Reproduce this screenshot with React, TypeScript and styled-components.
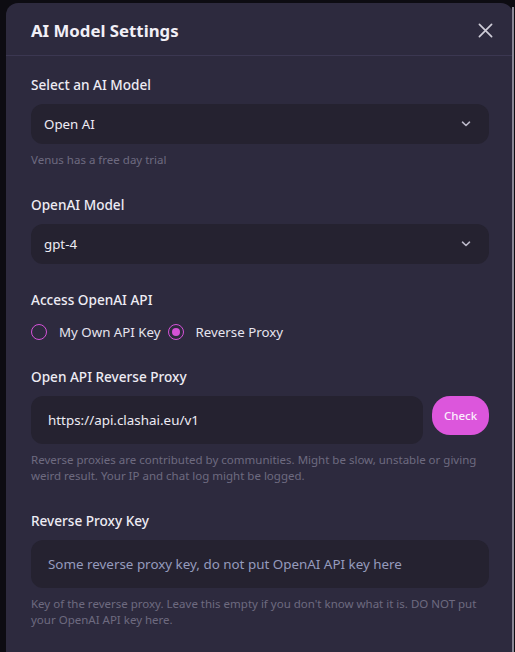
import React from "react";
import styled, { createGlobalStyle } from "styled-components";

const Global = createGlobalStyle`
  html, body { margin: 0; padding: 0; background: #0d0c12; }
  body { font-family: "Noto Sans", "Open Sans", sans-serif; -webkit-font-smoothing: antialiased; }
  * { box-sizing: border-box; }
`;

const Backdrop = styled.div`
  width: 515px;
  height: 652px;
  padding: 3px 1px 0 6px;
  overflow: hidden;
`;

const Modal = styled.div`
  position: relative;
  width: 507px;
  height: 700px;
  background: #2d2a3e;
  border-radius: 12px 12px 0 0;
  &::after {
    content: "";
    position: absolute;
    right: -1px;
    top: 4px;
    width: 2px;
    bottom: 0;
    background: #8b8896;
  }
`;

const Header = styled.div`
  display: flex;
  align-items: center;
  justify-content: space-between;
  height: 53px;
  padding: 3px 20px 0 25px;
  border-bottom: 1px solid #3b3751;
`;

const Title = styled.h1`
  margin: 0;
  font-size: 16.8px;
  font-weight: 700;
  color: #f1eff6;
`;

const CloseButton = styled.button`
  background: none;
  border: none;
  padding: 0;
  width: 16px;
  height: 16px;
  display: flex;
  align-items: center;
  justify-content: center;
  color: #cfcdd8;
`;

const Body = styled.div`
  display: flex;
  flex-direction: column;
  padding: 19px 24px 0 25px;
`;

const Field = styled.div<{ $gap?: number }>`
  display: flex;
  flex-direction: column;
  margin-bottom: ${(p) => p.$gap ?? 28}px;
`;

const Label = styled.div`
  font-size: 13.6px;
  font-weight: 500;
  color: #eeecf4;
  line-height: 20px;
  margin-bottom: 9px;
`;

const SelectBox = styled.div`
  display: flex;
  align-items: center;
  justify-content: space-between;
  height: 40px;
  padding: 0 18px 0 13px;
  background: #252230;
  border-radius: 12px;
  color: #eeecf4;
  font-size: 13.3px;
`;

const Hint = styled.div`
  margin-top: 8px;
  font-size: 11.5px;
  line-height: 16px;
  color: #6e6a80;
`;

const RadioRow = styled.div`
  display: flex;
  align-items: center;
  gap: 7px;
  margin-top: 4px;
`;

const RadioOption = styled.label`
  display: flex;
  align-items: center;
  gap: 12px;
  font-size: 13.3px;
  color: #e6e4ee;
`;

const Circle = styled.span<{ $checked?: boolean }>`
  width: 16px;
  height: 16px;
  border-radius: 50%;
  border: 1.5px solid #d552d8;
  display: flex;
  align-items: center;
  justify-content: center;
  &::after {
    content: "";
    width: 8px;
    height: 8px;
    border-radius: 50%;
    background: ${(p) => (p.$checked ? "#d552d8" : "transparent")};
  }
`;

const InputRow = styled.div`
  display: flex;
  align-items: flex-start;
  gap: 9px;
`;

const TextBox = styled.div<{ $placeholder?: boolean }>`
  flex: 1 0 auto;
  height: 48px;
  display: flex;
  align-items: center;
  padding: 0 17px;
  background: #252230;
  border-radius: 12px;
  font-size: 13.4px;
  color: ${(p) => (p.$placeholder ? "#959bbd" : "#eeecf4")};
`;

const CheckButton = styled.button`
  height: 39px;
  width: 57px;
  padding: 0;
  border: none;
  border-radius: 18px;
  background: #dc56dc;
  color: #fbeefc;
  font-family: inherit;
  font-size: 11.5px;
  font-weight: 500;
`;

const Chevron = () => (
  <svg width="10" height="10" viewBox="0 0 10 10" fill="none" stroke="#b9b6c6" strokeWidth="1.6" strokeLinecap="round" strokeLinejoin="round">
    <path d="M1.5 3.2l3.5 3.3 3.5-3.3" />
  </svg>
);

export default function App() {
  return (
    <>
      <Global />
      <Backdrop>
        <Modal>
          <Header>
            <Title>AI Model Settings</Title>
            <CloseButton aria-label="Close">
              <svg width="15" height="15" viewBox="0 0 16 16" stroke="currentColor" strokeWidth="1.8" strokeLinecap="round">
                <path d="M1.5 1.5l13 13M14.5 1.5l-13 13" />
              </svg>
            </CloseButton>
          </Header>
          <Body>
            <Field $gap={27}>
              <Label>Select an AI Model</Label>
              <SelectBox>
                <span>Open AI</span>
                <Chevron />
              </SelectBox>
              <Hint>Venus has a free day trial</Hint>
            </Field>
            <Field $gap={26}>
              <Label>OpenAI Model</Label>
              <SelectBox>
                <span>gpt-4</span>
                <Chevron />
              </SelectBox>
            </Field>
            <Field $gap={26}>
              <Label>Access OpenAI API</Label>
              <RadioRow>
                <RadioOption>
                  <Circle />
                  My Own API Key
                </RadioOption>
                <RadioOption>
                  <Circle $checked />
                  Reverse Proxy
                </RadioOption>
              </RadioRow>
            </Field>
            <Field $gap={27}>
              <Label>Open API Reverse Proxy</Label>
              <InputRow>
                <TextBox>https://api.clashai.eu/v1</TextBox>
                <CheckButton>Check</CheckButton>
              </InputRow>
              <Hint>
                Reverse proxies are contributed by communities. Might be slow, unstable or giving weird result. Your IP and chat log might be logged.
              </Hint>
            </Field>
            <Field>
              <Label>Reverse Proxy Key</Label>
              <TextBox $placeholder>Some reverse proxy key, do not put OpenAI API key here</TextBox>
              <Hint>
                Key of the reverse proxy. Leave this empty if you don't know what it is. DO NOT put your OpenAI API key here.
              </Hint>
            </Field>
          </Body>
        </Modal>
      </Backdrop>
    </>
  );
}
